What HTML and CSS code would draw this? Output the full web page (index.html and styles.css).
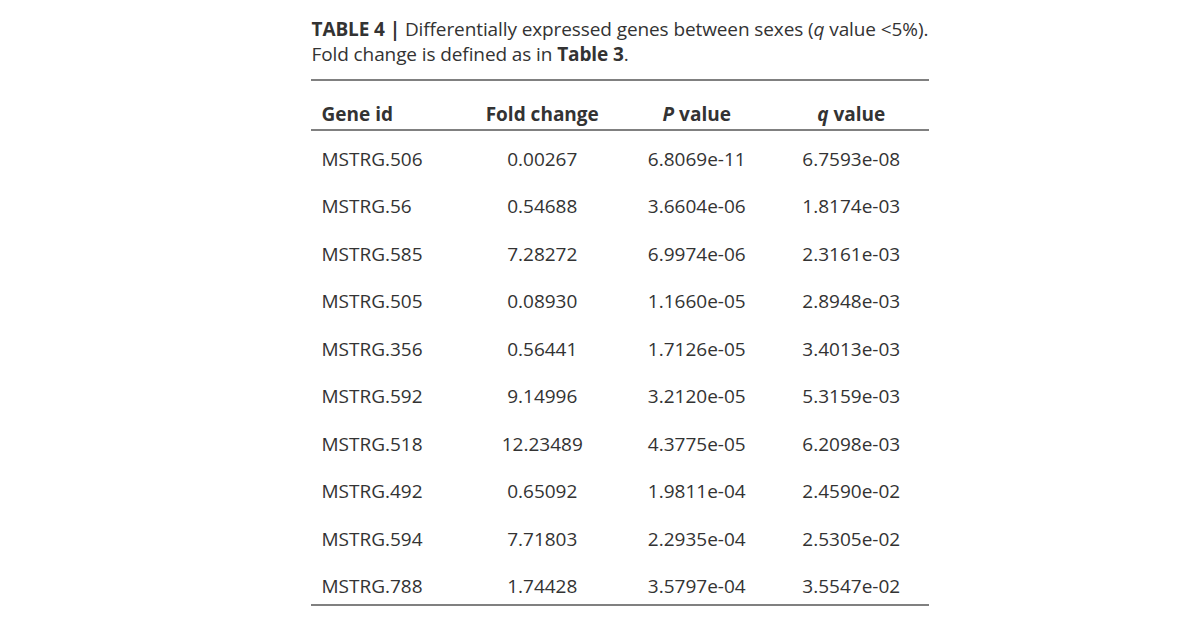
FILE: index.html
```html
<!DOCTYPE html>
<html>
<head>
<meta charset="utf-8">
<link rel="stylesheet" href="styles.css">
</head>
<body>
<div class="wrap">
  <p class="caption"><b>TABLE 4 | </b>Differentially expressed genes between sexes (<i>q</i> value &lt;5%).<br>Fold change is defined as in <b>Table 3</b>.</p>
  <table class="data">
    <colgroup><col class="c"><col class="c"><col class="c"><col class="c"></colgroup>
    <thead>
      <tr><th class="left">Gene id</th><th>Fold change</th><th><i>P</i> value</th><th><i>q</i> value</th></tr>
    </thead>
    <tbody>
      <tr><td class="left">MSTRG.506</td><td>0.00267</td><td>6.8069e-11</td><td>6.7593e-08</td></tr>
      <tr><td class="left">MSTRG.56</td><td>0.54688</td><td>3.6604e-06</td><td>1.8174e-03</td></tr>
      <tr><td class="left">MSTRG.585</td><td>7.28272</td><td>6.9974e-06</td><td>2.3161e-03</td></tr>
      <tr><td class="left">MSTRG.505</td><td>0.08930</td><td>1.1660e-05</td><td>2.8948e-03</td></tr>
      <tr><td class="left">MSTRG.356</td><td>0.56441</td><td>1.7126e-05</td><td>3.4013e-03</td></tr>
      <tr><td class="left">MSTRG.592</td><td>9.14996</td><td>3.2120e-05</td><td>5.3159e-03</td></tr>
      <tr><td class="left">MSTRG.518</td><td>12.23489</td><td>4.3775e-05</td><td>6.2098e-03</td></tr>
      <tr><td class="left">MSTRG.492</td><td>0.65092</td><td>1.9811e-04</td><td>2.4590e-02</td></tr>
      <tr><td class="left">MSTRG.594</td><td>7.71803</td><td>2.2935e-04</td><td>2.5305e-02</td></tr>
      <tr><td class="left">MSTRG.788</td><td>1.74428</td><td>3.5797e-04</td><td>3.5547e-02</td></tr>
    </tbody>
  </table>
</div>
</body>
</html>
```
FILE: styles.css
```css
html, body {
  margin: 0;
  padding: 0;
  background: #fff;
}
body {
  font-family: "Open Sans", "Liberation Sans", sans-serif;
  color: #333;
}
.wrap {
  width: 618px;
  margin: 0 auto;
  padding: 17px 0 0 48px;
}
.caption {
  margin: 0 0 0 1px;
  font-size: 19px;
  line-height: 25px;
  letter-spacing: -0.1px;
  white-space: nowrap;
}
.caption b { font-weight: 700; }
.data {
  margin-top: 12px;
  width: 618px;
  border-collapse: collapse;
  border-top: 2px solid #808080;
  border-bottom: 2px solid #808080;
  table-layout: fixed;
}
.data col.c { width: 25%; }
.data th, .data td {
  box-sizing: border-box;
  text-align: center;
  font-size: 19px;
  line-height: 24px;
  padding: 0;
  vertical-align: middle;
}
.data th {
  font-weight: 700;
  height: 50px;
  padding-top: 18px;
  border-bottom: 2px solid #808080;
}
.data td {
  font-weight: 400;
  height: 47.5px;
  padding-top: 10px;
}
.data .left {
  text-align: left;
  padding-left: 11px;
}
```
